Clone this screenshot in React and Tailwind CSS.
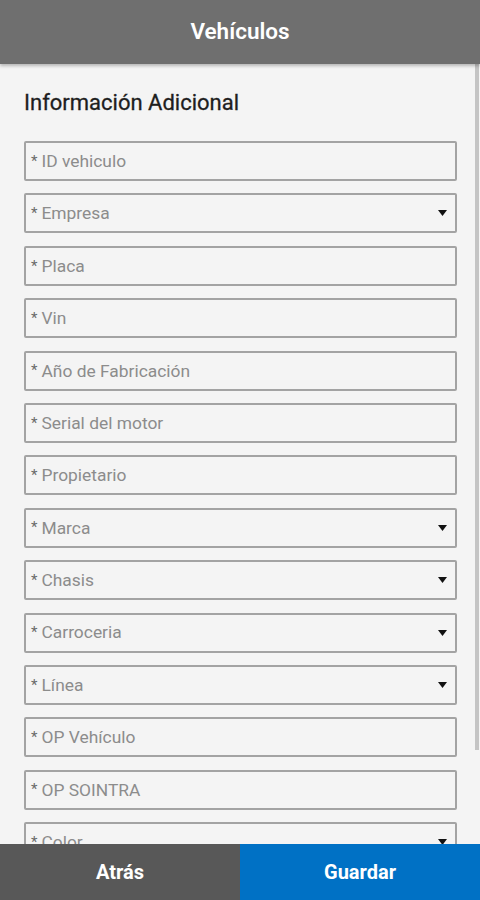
// Vehículos form screen: header, scrolling form list, fixed two-button footer.

const FIELDS = [
  { label: "ID vehiculo" },
  { label: "Empresa", select: true },
  { label: "Placa" },
  { label: "Vin" },
  { label: "Año de Fabricación" },
  { label: "Serial del motor" },
  { label: "Propietario" },
  { label: "Marca", select: true },
  { label: "Chasis", select: true },
  { label: "Carroceria", select: true },
  { label: "Línea", select: true },
  { label: "OP Vehículo" },
  { label: "OP SOINTRA" },
  { label: "Color", select: true },
];

function Field({ label, select }) {
  return (
    <div className="h-[40px] shrink-0 flex items-center border-2 border-[#a3a3a3] rounded-[2px] pl-[5px] pr-[8px]">
      <span className="text-[15px] text-[#6a6a6a] mr-[4px]">*</span>
      <span className="flex-1 text-[17.4px] text-[#8c8c8c]">{label}</span>
      {select && (
        <svg width="9" height="6" viewBox="0 0 9 6" className="shrink-0">
          <path d="M0 0 L9 0 L4.5 6 Z" fill="#111" />
        </svg>
      )}
    </div>
  );
}

export default function App() {
  return (
    <div className="h-[900px] w-[480px] flex flex-col bg-[#f4f4f4] font-['Roboto',sans-serif] overflow-hidden">
      <header className="h-[64px] shrink-0 bg-[#6f6f6f] flex items-center justify-center shadow-[0_2px_3px_rgba(0,0,0,0.25)] z-10">
        <h1 className="text-white text-[22.5px] font-semibold">Vehículos</h1>
      </header>

      <main className="relative flex-1 overflow-hidden">
        <div className="pl-[24px] pr-[23px] pt-[25px]">
          <h2 className="text-[22px] leading-[28px] font-normal text-[#1e1e1e] [-webkit-text-stroke:0.3px_#1e1e1e]">Información Adicional</h2>
          <div className="mt-[24px] flex flex-col gap-[12.4px]">
            {FIELDS.map((f) => (
              <Field key={f.label} {...f} />
            ))}
          </div>
        </div>
        {/* scrollbar thumb */}
        <div className="absolute right-[1px] top-0 w-[4px] h-[686px] bg-[#c4c4c4]" />
      </main>

      <footer className="h-[56px] shrink-0 flex">
        <button type="button" className="flex-1 bg-[#585858] text-white text-[20px] font-bold">Atrás</button>
        <button type="button" className="flex-1 bg-[#0071c5] text-white text-[20px] font-bold">Guardar</button>
      </footer>
    </div>
  );
}
